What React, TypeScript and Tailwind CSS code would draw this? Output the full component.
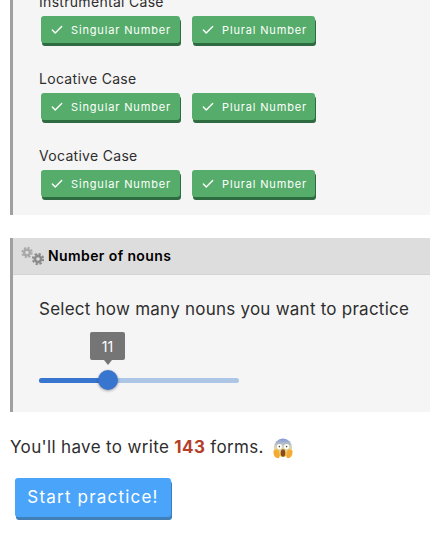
import { Check } from "lucide-react";

function NumberButton({ label, width }: { label: string; width: string }) {
  return (
    <button className={`flex h-[27px] items-center rounded-[3px] bg-[#56ad6b] pl-[9px] pt-[1px] text-[11px] font-normal tracking-[0.85px] text-white shadow-[1px_3px_0_#2f6b40] ${width}`}>
      <Check className="mr-[7px] h-[14px] w-[14px]" strokeWidth={2.4} />
      {label}
    </button>
  );
}

function CaseRow({ name }: { name: string }) {
  return (
    <div className="flex flex-col">
      <div className="h-[28px] text-[14px] leading-[28px] tracking-[0.3px] text-[#2e2e2e]">{name}</div>
      <div className="ml-[2px] flex gap-[12px]">
        <NumberButton label="Singular Number" width="w-[139px]" />
        <NumberButton label="Plural Number" width="w-[123px]" />
      </div>
    </div>
  );
}

function GearsIcon() {
  return (
    <svg viewBox="0 0 24 24" className="mr-[4px] h-[24px] w-[24px]">
      <g fill="none" stroke="#a8a8a8">
        <circle cx="7" cy="8.5" r="2.9" strokeWidth="2.4" />
        <circle cx="7" cy="8.5" r="4.8" strokeWidth="1.8" strokeDasharray="2.1 1.67" />
      </g>
      <g fill="none" stroke="#8a8a8a">
        <circle cx="18" cy="15" r="3.1" strokeWidth="2.6" />
        <circle cx="18" cy="15" r="5.2" strokeWidth="1.9" strokeDasharray="2.3 1.78" />
      </g>
    </svg>
  );
}

function ScreamEmoji() {
  return (
    <svg viewBox="0 0 20 21" className="ml-[9px] h-[21px] w-[20px]">
      <defs>
        <linearGradient id="face" x1="0" y1="0" x2="0" y2="1">
          <stop offset="0" stopColor="#7f97dc" />
          <stop offset="0.45" stopColor="#d8d6b8" />
          <stop offset="1" stopColor="#f8c63c" />
        </linearGradient>
      </defs>
      <circle cx="10" cy="9.8" r="9.2" fill="url(#face)" />
      <ellipse cx="6.4" cy="8.6" rx="2.5" ry="2.7" fill="#fff" />
      <ellipse cx="13.6" cy="8.6" rx="2.5" ry="2.7" fill="#fff" />
      <circle cx="6.4" cy="8.6" r="0.8" fill="#444" />
      <circle cx="13.6" cy="8.6" r="0.8" fill="#444" />
      <ellipse cx="10" cy="15" rx="2.3" ry="3.8" fill="#8a4a1c" />
      <path d="M0.6 12.5c-.5 3.2.6 7 3.6 7.6 1.6.3 2.6-.8 2.4-2.4l-.9-4.4c-.4-1.8-1.7-2.2-2.8-1.6z" fill="#f5ab32" />
      <path d="M19.4 12.5c.5 3.2-.6 7-3.6 7.6-1.6.3-2.6-.8-2.4-2.4l.9-4.4c.4-1.8 1.7-2.2 2.8-1.6z" fill="#f5ab32" />
    </svg>
  );
}

export default function App() {
  return (
    <div className="h-[558px] w-[430px] overflow-hidden bg-white font-['Inter',sans-serif] text-[#2e2e2e]">
      <div className="-mt-[12px] pl-[10px]">
        <section className="flex flex-col gap-[22px] border-l-[3px] border-[#a0a0a0] bg-[#f5f5f5] pb-[18px] pl-[26px]">
          <CaseRow name="Instrumental Case" />
          <CaseRow name="Locative Case" />
          <CaseRow name="Vocative Case" />
        </section>

        <section className="mt-[23px] h-[174px] border-l-[3px] border-[#a0a0a0] bg-[#f5f5f5]">
          <div className="flex h-[37px] items-center border-b border-[#d4d4d4] bg-[#dddddd] pb-[1px] pl-[7px] text-[14px] font-semibold tracking-[0.4px] text-black">
            <GearsIcon />
            Number of nouns
          </div>
          <div className="pl-[26px] pt-[22px]">
            <p className="text-[17px] leading-[24px] tracking-[0.24px] text-[#2e2e2e]">Select how many nouns you want to practice</p>
            <div className="relative mt-[11px] h-[60px] w-[200px]">
              <div className="absolute left-[51px] top-0 flex h-[28px] w-[35px] items-center justify-center rounded-[2px] bg-[#757575] text-[14px] text-white">
                11
              </div>
              <div className="absolute left-[65px] top-[28px] h-0 w-0 border-x-[4px] border-t-[5px] border-x-transparent border-t-[#757575]" />
              <div className="absolute left-0 top-[46px] h-[5px] w-[200px] rounded-full bg-[#aec6e6]" />
              <div className="absolute left-0 top-[46px] h-[5px] w-[69px] rounded-full bg-[#3875cf]" />
              <div className="absolute left-[59px] top-[38px] h-[20px] w-[20px] rounded-full bg-[#3875cf] shadow-[0_1px_3px_rgba(0,0,0,0.35)]" />
            </div>
          </div>
        </section>

        <p className="mt-[23px] flex h-[26px] items-center text-[17px] tracking-[0.35px]">
          <span className="whitespace-pre">You'll have to write <span className="font-bold text-[#b5402a]">143</span> forms.</span>
          <ScreamEmoji />
        </p>

        <button className="ml-[5px] mt-[17px] h-[39px] w-[156px] rounded-[3px] bg-[#4aa5fa] text-[17px] font-normal tracking-[1.2px] text-white shadow-[1px_3px_0_#417fb8]">
          Start practice!
        </button>
      </div>
    </div>
  );
}
